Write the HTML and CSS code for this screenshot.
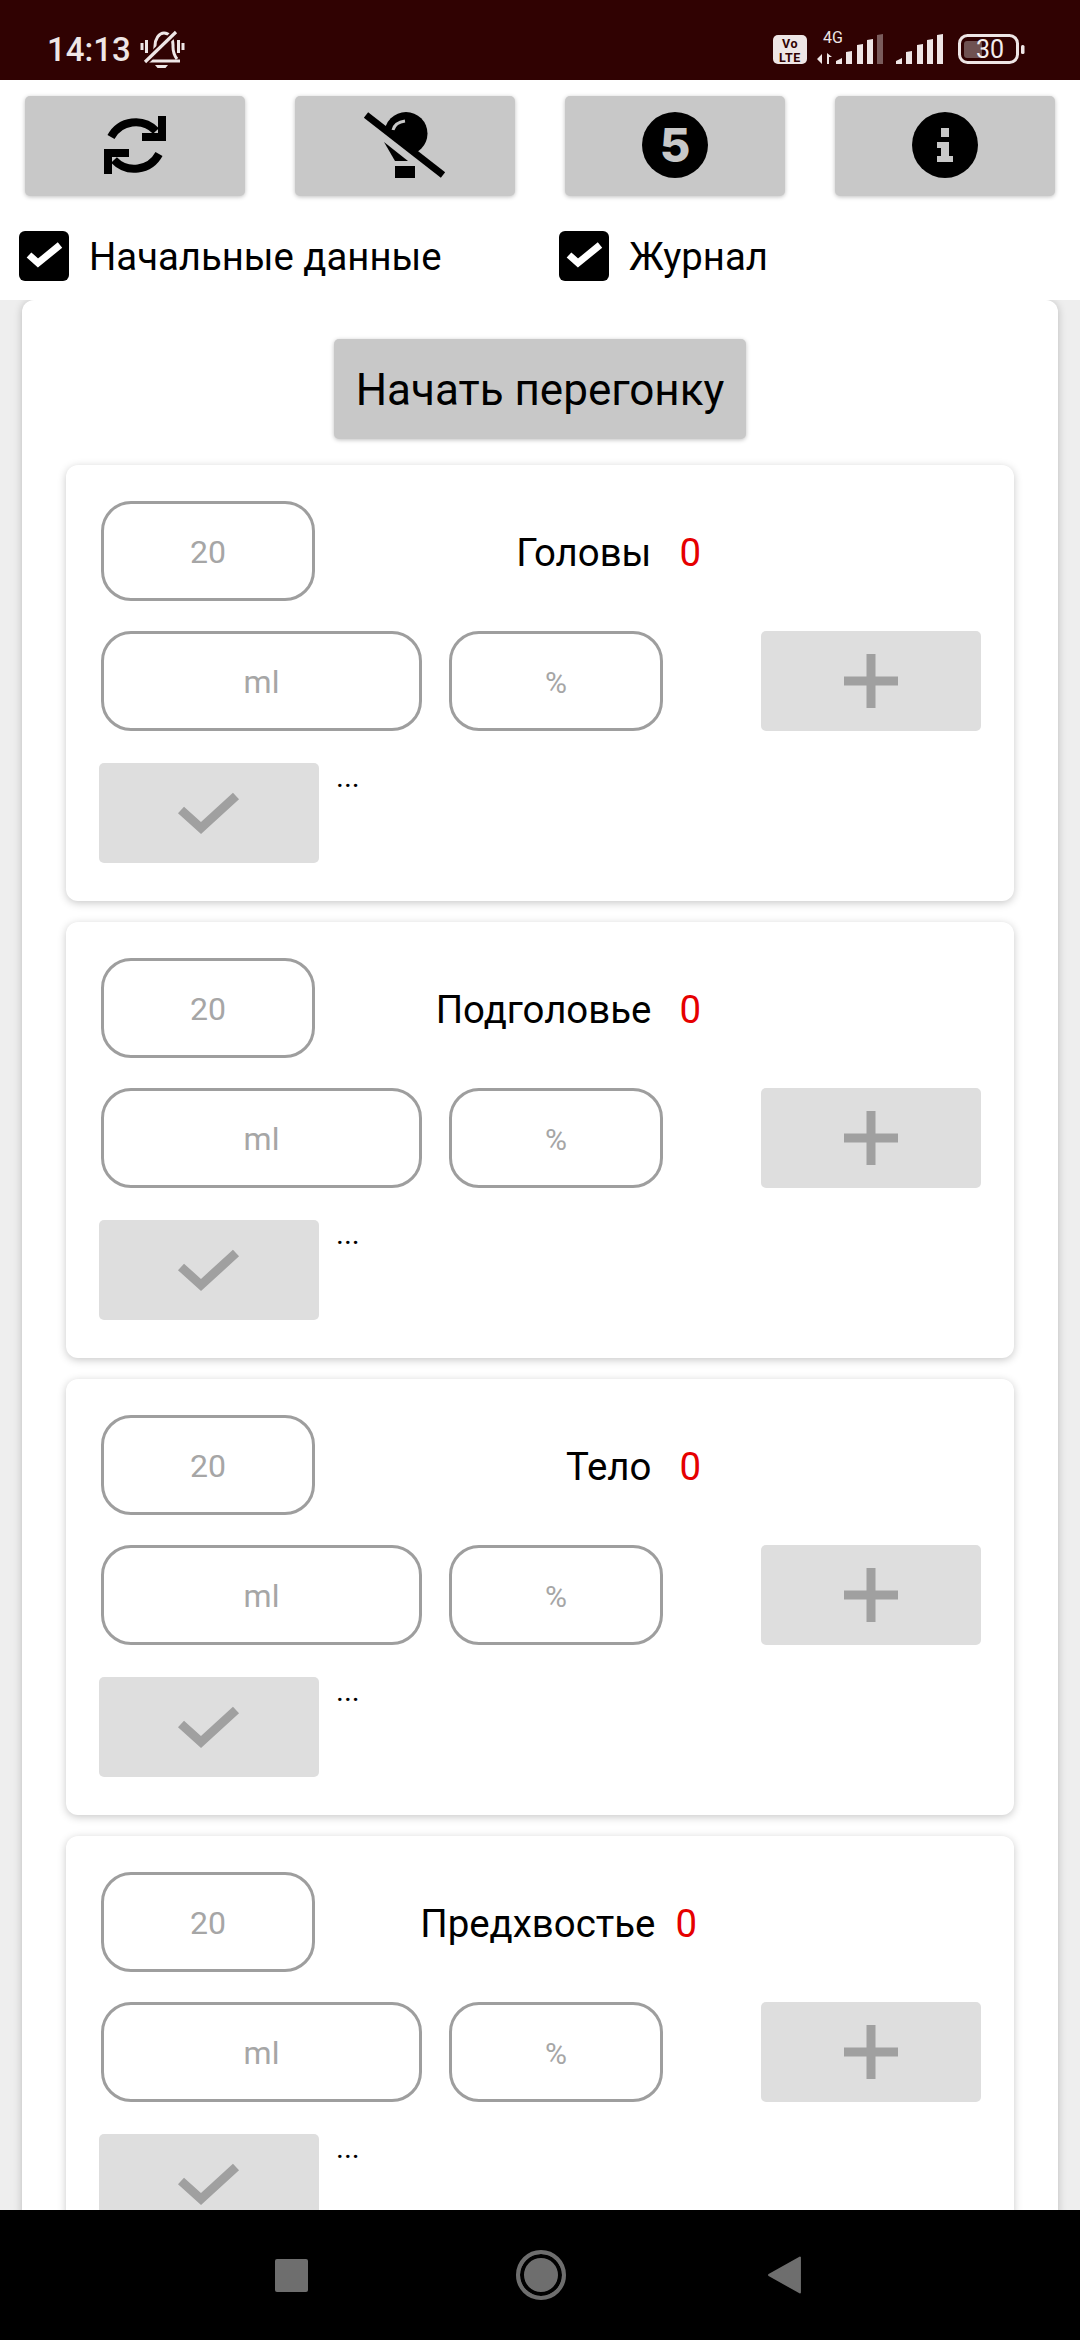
FILE: index.html
```html
<!DOCTYPE html>
<html lang="ru">
<head>
<meta charset="utf-8">
<title>Перегонка</title>
<link rel="stylesheet" href="styles.css">
</head>
<body>
<svg class="defs" width="0" height="0">
  <symbol id="plus" viewBox="0 0 54 54"><path d="M22.5 0h9v22.5H54v9H31.5V54h-9V31.5H0v-9h22.5z"/></symbol>
  <symbol id="check" viewBox="0 0 64 48"><path d="M5 21 L25 39 L60 7" fill="none" stroke="currentColor" stroke-width="9"/></symbol>
  <symbol id="box" viewBox="0 0 50 50"><path d="M10 24 L19 32 L41 14" fill="none" stroke="#fff" stroke-width="7"/></symbol>
</svg>
<div class="page">
  <div class="status">
    <div class="status-left">
      <span class="time">14:13</span>
      <svg class="bell" viewBox="0 0 46 42" fill="none" stroke="#eee6e6" stroke-width="3">
        <path d="M2 15v7M6.500 12v13M43 15v7M38.500 12v13"/>
        <path d="M11 31c3-4 4-8 4-13 0-7 4-13 9-13 5 0 9 5 9 12v2c0 4 1 8 4 12"/>
        <path d="M6 33H40"/>
        <path d="M5 34L36 4" stroke="#300202" stroke-width="7"/>
        <path d="M5 34L36 4" stroke-width="3.200"/>
        <path d="M15 37h13l-2.500 3h-8z" fill="#eee6e6" stroke="none"/>
      </svg>
    </div>
    <svg class="status-right" viewBox="0 0 270 50">
      <rect x="8" y="10" width="34" height="29" rx="5" fill="#eee6e6"/>
      <text x="25" y="23" class="vo">Vo</text>
      <text x="25" y="36.500" class="vo">LTE</text>
      <text x="58" y="18" class="fourg">4G</text>
      <path d="M57 29l-5 5 5 5zM59 28v11M62 28v11h2v-7h3z" fill="#eee6e6" stroke="none"/>
      <g fill="#eee6e6">
        <path d="M71 39v-3l6-3v6zM81 39V27l6-1v13zM92 39V20l6-1v20zM102 39V15l6-1v25z"/>
        <path d="M112 39V10l6-1v30z" fill="#7a5c5c"/>
        <path d="M131 39v-3l6-3v6zM141 39V27l6-1v13zM152 39V20l6-1v20zM162 39V15l6-1v25zM172 39V10l6-1v30z"/>
      </g>
      <rect x="194.500" y="10.500" width="58" height="27" rx="8" fill="none" stroke="#eee6e6" stroke-width="3"/>
      <rect x="199" y="16" width="18" height="17" rx="3" fill="#6f5252"/>
      <rect x="256" y="20" width="3.500" height="9" rx="1.500" fill="#eee6e6"/>
      <text x="211" y="33" class="batt">30</text>
    </svg>
  </div>

  <div class="head">
    <div class="tools">
      <button class="tool">
        <svg class="tool-ic" viewBox="-5 1 100 90">
          <path d="M21 37A28 28 0 0 1 66 31" fill="none" stroke="#000" stroke-width="8"/>
          <path d="M76 16v25H52v-8h16V16z"/>
          <path d="M69 54A28 28 0 0 1 24 60" fill="none" stroke="#000" stroke-width="8"/>
          <path d="M14 49h25v8H22v17h-8z"/>
        </svg>
      </button>
      <button class="tool">
        <svg class="tool-ic" viewBox="0 1 100 90">
          <circle cx="51" cy="33.500" r="21.500"/>
          <path d="M11 15L88 75V95H0V15z" fill="#c8c8c8"/>
          <path d="M29 42L53 61H40z"/>
          <rect x="40" y="66" width="20" height="12"/>
          <path d="M38 30c1-4 5-8 12-9" fill="none" stroke="#c8c8c8" stroke-width="3"/>
          <path d="M11 15L88 75" stroke="#000" stroke-width="7"/>
        </svg>
      </button>
      <button class="tool">
        <svg class="tool-ic" viewBox="0 1 100 90">
          <circle cx="50" cy="45" r="33"/>
          <text x="50" y="62" class="five">5</text>
        </svg>
      </button>
      <button class="tool">
        <svg class="tool-ic" viewBox="0 1 100 90">
          <circle cx="50" cy="45" r="33"/>
          <path fill="#c8c8c8" d="M46 28h8v9h-8zM42 42h12v14h4v6H42v-6h4v-8h-4z"/>
        </svg>
      </button>
    </div>
    <div class="checks">
      <div class="check-item">
        <span class="box"><svg viewBox="0 0 50 50"><use href="#box"/></svg></span>
        <span class="check-label">Начальные данные</span>
      </div>
      <div class="check-item">
        <span class="box"><svg viewBox="0 0 50 50"><use href="#box"/></svg></span>
        <span class="check-label">Журнал</span>
      </div>
    </div>
  </div>

  <div class="scroll">
    <div class="outer">
      <button class="start">Начать перегонку</button>

      <section class="card">
        <div class="row-top">
          <div class="field f-short">20</div>
          <div class="name">Головы</div>
          <div class="zero">0</div>
        </div>
        <div class="row-mid">
          <div class="field f-wide">ml</div>
          <div class="field f-pct">%</div>
          <button class="act act-plus"><svg class="ic-plus"><use href="#plus"/></svg></button>
        </div>
        <div class="row-low">
          <button class="act"><svg class="ic-check"><use href="#check"/></svg></button>
          <div class="dots">...</div>
        </div>
      </section>

      <section class="card">
        <div class="row-top">
          <div class="field f-short">20</div>
          <div class="name">Подголовье</div>
          <div class="zero">0</div>
        </div>
        <div class="row-mid">
          <div class="field f-wide">ml</div>
          <div class="field f-pct">%</div>
          <button class="act act-plus"><svg class="ic-plus"><use href="#plus"/></svg></button>
        </div>
        <div class="row-low">
          <button class="act"><svg class="ic-check"><use href="#check"/></svg></button>
          <div class="dots">...</div>
        </div>
      </section>

      <section class="card">
        <div class="row-top">
          <div class="field f-short">20</div>
          <div class="name">Тело</div>
          <div class="zero">0</div>
        </div>
        <div class="row-mid">
          <div class="field f-wide">ml</div>
          <div class="field f-pct">%</div>
          <button class="act act-plus"><svg class="ic-plus"><use href="#plus"/></svg></button>
        </div>
        <div class="row-low">
          <button class="act"><svg class="ic-check"><use href="#check"/></svg></button>
          <div class="dots">...</div>
        </div>
      </section>

      <section class="card">
        <div class="row-top row-long">
          <div class="field f-short">20</div>
          <div class="name">Предхвостье</div>
          <div class="zero">0</div>
        </div>
        <div class="row-mid">
          <div class="field f-wide">ml</div>
          <div class="field f-pct">%</div>
          <button class="act act-plus"><svg class="ic-plus"><use href="#plus"/></svg></button>
        </div>
        <div class="row-low">
          <button class="act"><svg class="ic-check"><use href="#check"/></svg></button>
          <div class="dots">...</div>
        </div>
      </section>
    </div>
  </div>

  <div class="nav">
    <span class="nav-square"></span>
    <span class="nav-circle"></span>
    <svg class="nav-back" viewBox="0 0 32 37"><path d="M31 1.500V35.500L1 18.500z" fill="#6e6e6e" stroke="#6e6e6e" stroke-width="2" stroke-linejoin="round"/></svg>
  </div>
</div>
</body>
</html>
```

FILE: styles.css
```css
* { box-sizing: border-box; }
html, body { margin: 0; padding: 0; }
body { font-family: Roboto, "Liberation Sans", sans-serif; background: #fff; }
button { font: inherit; border: 0; padding: 0; color: inherit; }
.defs { position: absolute; }

.page { width: 1080px; height: 2340px; display: flex; flex-direction: column; overflow: hidden; }

/* status bar */
.status { height: 80px; flex: none; background: #300202; display: flex; justify-content: space-between; padding: 25px 45px 0 47px; }
.status-left { display: flex; align-items: flex-start; gap: 9px; }
.time { color: #eee6e6; font-size: 33px; font-weight: 500; line-height: 50px; }
.bell { width: 46px; height: 42px; margin-top: 3px; }
.status-right { width: 270px; height: 50px; }
.vo { font: 700 12.500px Roboto, sans-serif; letter-spacing: .6px; fill: #300202; text-anchor: middle; }
.fourg { font: 400 16px Roboto, sans-serif; fill: #eee6e6; }
.batt { font: 400 25px Roboto, sans-serif; fill: #f2eded; }

/* header */
.head { flex: none; height: 220px; background: #fff; padding: 16px 25px 0 19px; }
.tools { display: flex; gap: 50px; margin-left: 6px; }
.tool { width: 220px; height: 100px; background: #c8c8c8; border-radius: 5px; box-shadow: 0 1px 4px rgba(0,0,0,.25); display: flex; align-items: center; justify-content: center; }
.tool-ic { width: 100px; height: 90px; display: block; }
.five { font: 800 47px Inter, sans-serif; fill: #c8c8c8; text-anchor: middle; }
.checks { display: flex; margin-top: 35px; }
.check-item { width: 540px; flex: none; display: flex; align-items: center; gap: 20px; height: 50px; }
.box { width: 50px; height: 50px; background: #000; border-radius: 6px; display: block; flex: none; }
.box svg { display: block; width: 50px; height: 50px; }
.check-label { font-size: 38.300px; color: #000; line-height: 50px; margin-top: 2px; }

/* scrolled area */
.scroll { flex: 1; min-height: 0; background: #eee; overflow: hidden; padding: 0 22px; }
.outer { background: #fff; border-radius: 12px; box-shadow: 0 1px 8px rgba(0,0,0,.22); padding: 39px 44px 0; display: flex; flex-direction: column; gap: 21px; }
.start { align-self: center; width: 412px; height: 100px; margin-bottom: 5px; padding-top: 2px; background: #c8c8c8; border-radius: 5px; box-shadow: 0 1px 4px rgba(0,0,0,.25); font-size: 44px; color: #000; }

.card { height: 436px; flex: none; background: #fff; border-radius: 12px; box-shadow: 0 2px 8px rgba(0,0,0,.22); padding: 36px 33px 0; }
.row-top { display: flex; align-items: center; height: 100px; }
.row-mid { display: flex; align-items: center; height: 100px; margin-top: 30px; }
.row-low { display: flex; align-items: flex-start; height: 100px; margin-top: 32px; }

.field { height: 100px; border: 3px solid #9e9e9e; border-radius: 30px; padding-top: 2px; display: flex; align-items: center; justify-content: center; color: #a6a6a6; font-size: 32px; margin-left: 2px; }
.f-short { width: 214px; }
.f-wide { width: 321px; }
.f-pct { width: 214px; margin-left: 27px; font-size: 30px; }

.name { font-size: 38.400px; color: #000; margin-left: auto; padding-top: 2px; }
.zero { font-size: 38.400px; color: #e60000; margin-left: 28px; margin-right: 280px; padding-top: 2px; }
.row-long .zero { margin-left: 20px; margin-right: 284px; }

.act { width: 220px; height: 100px; background: #dedede; border-radius: 5px; display: flex; align-items: center; justify-content: center; }
.act-plus { margin-left: auto; }
.ic-plus { width: 54px; height: 54px; fill: #a0a0a0; display: block; }
.ic-check { width: 64px; height: 48px; color: #a0a0a0; display: block; margin: 0 0 0 -2px; }
.dots { font-size: 30px; color: #000; margin: -2px 0 0 17px; line-height: 32px; }

/* navigation bar */
.nav { flex: none; height: 130px; background: #000; position: relative; display: flex; align-items: center; padding-left: 275px; }
.nav-square { width: 33px; height: 33px; background: #6e6e6e; border-radius: 2px; flex: none; margin-top: 0; }
.nav-circle { width: 50px; height: 50px; border-radius: 50%; border: 4px solid #6e6e6e; background: #6e6e6e; box-shadow: inset 0 0 0 4px #000; flex: none; margin-left: 208px; }
.nav-back { width: 33px; height: 38px; margin-left: 202px; flex: none; }
```
